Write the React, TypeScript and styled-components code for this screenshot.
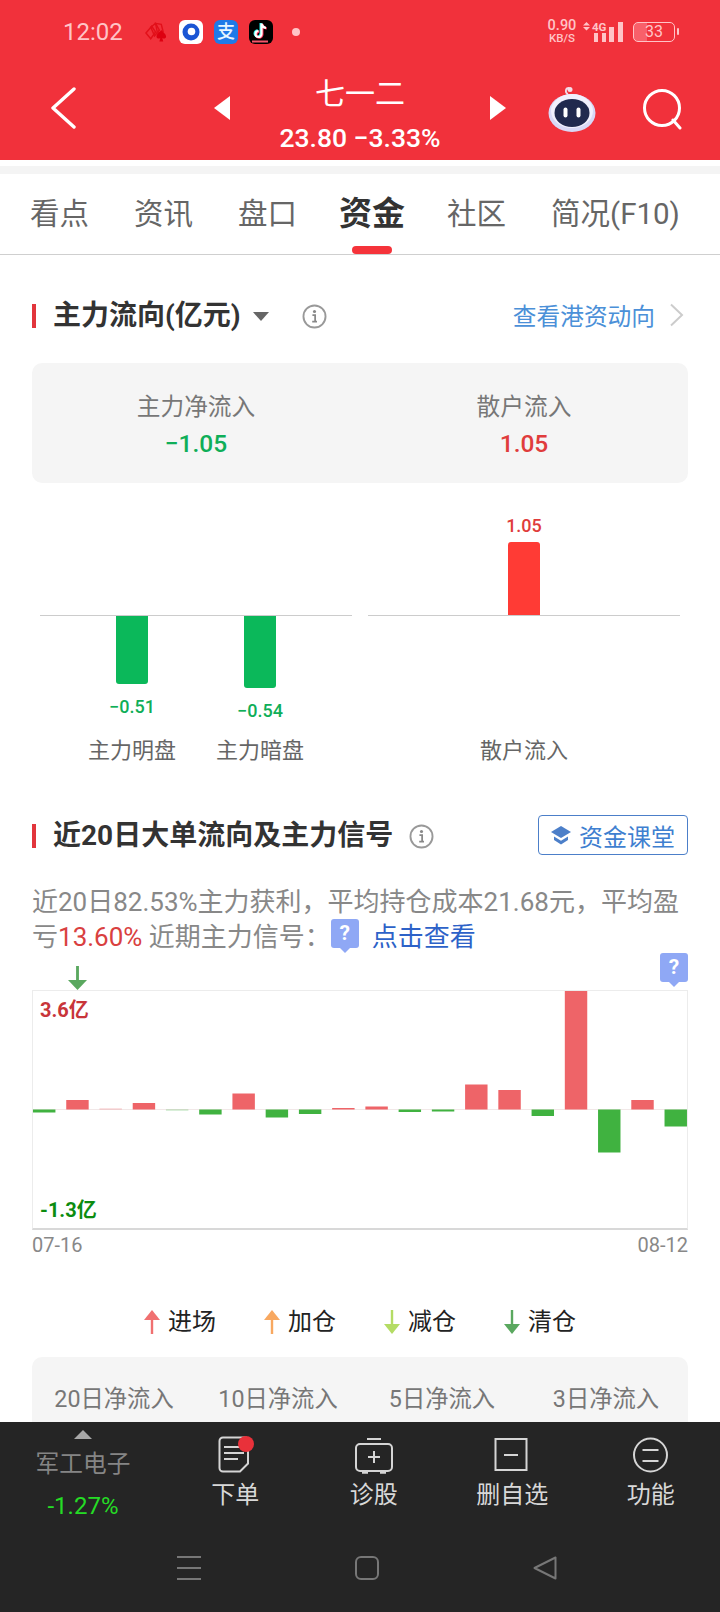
import styled, { createGlobalStyle } from "styled-components";

const GlobalStyle = createGlobalStyle`
  html, body {
    margin: 0;
    padding: 0;
    background: #fff;
  }
  * {
    box-sizing: border-box;
  }
`;

const FONT = `Roboto, "Noto Sans CJK SC", sans-serif`;

const Page = styled.div`
  width: 720px;
  height: 1612px;
  display: flex;
  flex-direction: column;
  overflow: hidden;
  font-family: ${FONT};
  background: #fff;
`;

const Header = styled.header`
  height: 160px;
  flex: none;
  background: #f1313b;
  color: #fff;
`;

const StatusBar = styled.div`
  height: 64px;
  display: flex;
  align-items: center;
  padding: 0 45px 0 63px;
`;

const Clock = styled.span`
  font-size: 24px;
  line-height: 1;
  color: #ffc4c7;
  width: 82px;
`;

const AppIcons = styled.div`
  display: flex;
  align-items: center;
  gap: 11px;
`;

const AppTile = styled.div<{ $bg: string }>`
  width: 24px;
  height: 24px;
  border-radius: 6px;
  background: ${(p) => p.$bg};
  display: flex;
  align-items: center;
  justify-content: center;
  overflow: hidden;
`;

const AlipayGlyph = styled.span`
  font-size: 18px;
  line-height: 1;
  color: #eaf6ff;
  font-weight: 500;
`;

const NoticeDot = styled.span`
  width: 8px;
  height: 8px;
  border-radius: 50%;
  background: #ffc4c7;
  margin-left: 19px;
`;

const StatusRight = styled.div`
  margin-left: auto;
  display: flex;
  align-items: center;
  color: #ffc4c7;
`;

const Speed = styled.div`
  width: 30px;
  margin-right: 6px;
  display: flex;
  flex-direction: column;
  align-items: center;
  font-weight: 500;
  font-size: 14.5px;
  line-height: 13px;
  small {
    font-size: 11.5px;
    line-height: 13px;
  }
`;

const Battery = styled.div`
  width: 42px;
  height: 20px;
  margin-left: 10px;
  border: 1.5px solid #ffc4c7;
  border-radius: 5px;
  background: linear-gradient(90deg, #f8606a 33%, transparent 33%);
  font-size: 16px;
  line-height: 17px;
  text-align: center;
  position: relative;
  &::after {
    content: "";
    position: absolute;
    right: -5px;
    top: 5px;
    width: 2px;
    height: 7px;
    border-radius: 1px;
    background: #ffc4c7;
  }
`;

const NavRow = styled.div`
  height: 96px;
  display: grid;
  grid-template-columns: 1fr 292px 1fr;
  align-items: center;
`;

const BackButton = styled.div`
  padding-left: 50px;
  display: flex;
  margin-top: -8px;
`;

const StockSwitch = styled.div`
  display: flex;
  align-items: center;
  justify-content: space-between;
`;

const Triangle = styled.span<{ $dir: "left" | "right" }>`
  width: 0;
  height: 0;
  margin-top: -8px;
  border-top: 12px solid transparent;
  border-bottom: 12px solid transparent;
  ${(p) =>
    p.$dir === "left"
      ? "border-right: 16px solid #fff;"
      : "border-left: 16px solid #fff;"}
`;

const StockInfo = styled.div`
  display: flex;
  flex-direction: column;
  align-items: center;
  gap: 7px;
  margin-top: 3px;
`;

const StockName = styled.div`
  font-size: 30px;
  line-height: 42px;
  letter-spacing: 0;
`;

const StockQuote = styled.div`
  font-size: 26.5px;
  line-height: 32px;
  font-weight: 500;
  white-space: nowrap;
`;

const NavActions = styled.div`
  display: flex;
  align-items: center;
  justify-content: flex-end;
  padding-right: 36px;
  gap: 46px;
  margin-top: -6px;
`;

const GrayBand = styled.div`
  height: 14px;
  flex: none;
  background: linear-gradient(#fff 6px, #f4f4f4 6px);
`;

const Tabs = styled.nav`
  height: 81px;
  flex: none;
  display: flex;
  align-items: center;
  gap: 45px;
  padding: 0 0 0 30px;
  border-bottom: 1px solid #cfcfcf;
  position: relative;
`;

const Tab = styled.div<{ $active?: boolean }>`
  font-size: ${(p) => (p.$active ? "33px" : "29.5px")};
  font-weight: ${(p) => (p.$active ? 700 : 400)};
  color: ${(p) => (p.$active ? "#333" : "#666")};
  line-height: 40px;
  margin: 0 ${(p) => (p.$active ? "-3px" : "0")};
  white-space: nowrap;
  position: relative;
  ${(p) =>
    p.$active &&
    `&::after {
      content: "";
      position: absolute;
      left: 13px;
      bottom: -20px;
      width: 40px;
      height: 8px;
      border-radius: 4px;
      background: #f5333a;
    }`}
`;

const Main = styled.main`
  flex: 1;
  min-height: 0;
  overflow: hidden;
  padding: 41px 32px 0;
`;

const SectionHead = styled.div<{ $top?: number }>`
  height: 40px;
  margin-top: ${(p) => p.$top ?? 0}px;
  display: flex;
  align-items: center;
`;

const RedMark = styled.span`
  width: 4px;
  height: 24px;
  background: #e2353c;
  margin-right: 17px;
`;

const SectionTitle = styled.h2`
  margin: 0;
  font-size: 28px;
  font-weight: 700;
  color: #333;
  line-height: 40px;
  white-space: nowrap;
`;

const CaretDown = styled.span`
  width: 0;
  height: 0;
  margin-left: 12px;
  border-left: 8px solid transparent;
  border-right: 8px solid transparent;
  border-top: 9px solid #666;
`;

const InfoWrap = styled.span<{ $left: number }>`
  display: flex;
  margin-left: ${(p) => p.$left}px;
`;

const MoreLink = styled.div`
  margin-left: auto;
  margin-top: -3px;
  display: flex;
  align-items: center;
  gap: 14px;
  font-size: 23.7px;
  color: #4b90d8;
  padding-right: 4px;
`;

const SummaryCard = styled.div`
  height: 120px;
  margin-top: 27px;
  padding-top: 8px;
  background: #f5f5f5;
  border-radius: 10px;
  display: grid;
  grid-template-columns: 1fr 1fr;
  align-items: center;
  text-align: center;
`;

const SummaryLabel = styled.div`
  font-size: 23.7px;
  line-height: 34px;
  color: #777;
`;

const SummaryValue = styled.div<{ $color: string }>`
  font-size: 24.5px;
  line-height: 40px;
  font-weight: 500;
  color: ${(p) => p.$color};
`;

const FlowCharts = styled.div`
  display: flex;
  gap: 16px;
  padding: 0 8px;
`;

const FlowGroup = styled.div`
  width: 312px;
`;

const FlowUpper = styled.div`
  height: 133px;
  display: flex;
  justify-content: center;
  align-items: flex-end;
  border-bottom: 1px solid #ccc;
`;

const FlowLower = styled.div`
  height: 120px;
  display: flex;
  justify-content: center;
`;

const FlowColumn = styled.div`
  width: 128px;
  display: flex;
  flex-direction: column;
  align-items: center;
`;

const FlowBar = styled.div<{ $up?: boolean; $height: number }>`
  width: 32px;
  height: ${(p) => p.$height}px;
  background: ${(p) => (p.$up ? "#ff3b35" : "#0bb85a")};
  border-radius: ${(p) => (p.$up ? "3px 3px 0 0" : "0 0 3px 3px")};
`;

const FlowValue = styled.div<{ $color: string; $gap: number; $above?: boolean }>`
  font-size: 18px;
  line-height: 22px;
  font-weight: 500;
  color: ${(p) => p.$color};
  ${(p) => (p.$above ? `margin-bottom: ${p.$gap}px;` : `margin-top: ${p.$gap}px;`)}
`;

const FlowNames = styled.div`
  display: flex;
  justify-content: center;
  height: 30px;
`;

const FlowName = styled.div`
  width: 128px;
  text-align: center;
  font-size: 22px;
  line-height: 30px;
  color: #666;
`;

const CourseButton = styled.div`
  margin-left: auto;
  margin-top: -2px;
  width: 150px;
  height: 40px;
  border: 1.5px solid #4c7fc9;
  border-radius: 4px;
  display: flex;
  align-items: center;
  gap: 7px;
  padding-left: 11px;
  font-size: 24px;
  color: #3f7fd0;
  white-space: nowrap;
`;

const Intro = styled.p`
  margin: 29px 0 0;
  font-size: 26px;
  line-height: 35px;
  color: #888;
  white-space: nowrap;
`;

const RedText = styled.span`
  color: #d94040;
`;

const BlueText = styled.span`
  color: #2d62c8;
`;

const QuestionTag = styled.span`
  display: inline-flex;
  width: 28px;
  height: 29px;
  align-items: center;
  justify-content: center;
  background: #8fa8f5;
  border-radius: 3px;
  color: #fff;
  font-size: 21px;
  font-weight: 700;
  line-height: 1;
  position: relative;
  &::after {
    content: "";
    position: absolute;
    left: 9px;
    bottom: -5px;
    border-left: 5px solid transparent;
    border-right: 5px solid transparent;
    border-top: 5px solid #8fa8f5;
  }
`;

const InlineTag = styled(QuestionTag)`
  margin: 0 13px 0 0;
  top: -6px;
`;

const SignalRow = styled.div`
  height: 37px;
  margin-top: -2px;
  padding-left: 36px;
  display: flex;
  justify-content: space-between;
  align-items: flex-end;
`;

const SignalTag = styled(QuestionTag)`
  align-self: flex-start;
`;

const ChartBox = styled.div`
  height: 240px;
  position: relative;
  border: 1px solid #ececec;
  border-bottom: 2px solid #d8d8d8;
  svg {
    display: block;
    width: 100%;
    height: 100%;
  }
`;

const ChartLabel = styled.span<{ $color: string; $pos: "top" | "bottom" }>`
  position: absolute;
  left: 7px;
  ${(p) => (p.$pos === "top" ? "top: 5px;" : "bottom: 4px;")}
  font-size: 20px;
  line-height: 28px;
  font-weight: 700;
  color: ${(p) => p.$color};
`;

const DateRow = styled.div`
  height: 30px;
  display: flex;
  justify-content: space-between;
  align-items: center;
  font-size: 20px;
  color: #888;
`;

const Legend = styled.div`
  margin-top: 45px;
  height: 34px;
  display: flex;
  justify-content: center;
  gap: 48px;
`;

const LegendItem = styled.div`
  display: flex;
  align-items: center;
  gap: 8px;
  font-size: 24px;
  line-height: 34px;
  color: #222;
`;

const StatsCard = styled.div`
  margin-top: 18px;
  height: 160px;
  padding-top: 25px;
  background: #f5f5f5;
  border-radius: 10px;
  display: grid;
  grid-template-columns: repeat(4, 1fr);
  text-align: center;
`;

const StatsLabel = styled.div`
  font-size: 23.3px;
  line-height: 34px;
  color: #777;
  white-space: nowrap;
`;

const BottomBar = styled.footer`
  height: 190px;
  flex: none;
  background: #252525;
`;

const ActionRow = styled.div`
  height: 122px;
  display: grid;
  grid-template-columns: 166px repeat(4, 1fr);
`;

const SectorBlock = styled.div`
  display: flex;
  flex-direction: column;
  align-items: center;
  padding-top: 8px;
`;

const SectorCaret = styled.span`
  width: 0;
  height: 0;
  border-left: 9px solid transparent;
  border-right: 9px solid transparent;
  border-bottom: 9px solid #a8a8a8;
`;

const SectorName = styled.div`
  margin-top: 10px;
  font-size: 23.7px;
  line-height: 30px;
  color: #858585;
`;

const SectorChange = styled.div`
  margin-top: 12px;
  font-size: 24px;
  line-height: 30px;
  color: #25dc25;
`;

const ActionItem = styled.div`
  display: flex;
  flex-direction: column;
  align-items: center;
  padding-top: 13px;
`;

const ActionLabel = styled.div`
  margin-top: 3px;
  font-size: 24px;
  line-height: 34px;
  color: #d8d8d8;
`;

const SystemNav = styled.div`
  height: 48px;
  display: flex;
  justify-content: center;
  align-items: center;
  gap: 154px;
  padding-left: 13px;
`;

const Info = () => (
  <svg width="25" height="25" viewBox="0 0 24 24" fill="none">
    <circle cx="12" cy="12" r="10.6" stroke="#999" strokeWidth="1.8" />
    <circle cx="12" cy="7.2" r="1.5" fill="#888" />
    <path d="M10 10.6h2.6v6.2M9.8 17h4.6" stroke="#888" strokeWidth="1.7" />
  </svg>
);

const CardsIcon = () => (
  <svg width="23" height="24" viewBox="0 0 24 24" fill="none">
    <g stroke="#e2101a" strokeWidth="1.5">
      <path d="M1 13 7 6l4 6-5 7z" />
      <path d="M6 7l5-4 4 7-5 6z" />
      <path d="M11 3l6 1 2 8-6 1z" />
    </g>
    <path d="M17 10c2 3 5 4 5 7 0 2-3 2.500-4 1l1 4h-4l1-4c-1 1.500-4 1-4-1 0-3 3-4 5-7z" fill="#dd0010" />
  </svg>
);

const TiktokIcon = () => (
  <svg width="24" height="24" viewBox="0 0 24 24" fill="none">
    <path d="M12.500 3.500v10.500a3 3 0 1 1-3-3" stroke="#25f4ee" strokeWidth="2.400" transform="translate(-.8 -.6)" />
    <path d="M12.500 3.500v10.500a3 3 0 1 1-3-3M12.500 3.500c.4 2.500 2 4 4.500 4.300" stroke="#fe2c55" strokeWidth="2.400" transform="translate(.8 .6)" />
    <path d="M12.500 3.500v10.500a3 3 0 1 1-3-3M12.500 3.500c.4 2.500 2 4 4.500 4.300" stroke="#fff" strokeWidth="2.200" />
    <path d="M3 21.500h16" stroke="#f5556a" strokeWidth="2" />
  </svg>
);

const NetworkIcon = () => (
  <svg width="40" height="24" viewBox="0 0 40 24" fill="#ffc4c7">
    <path d="M0 5.500 3.500 2 7 5.500zM0 7l3.500 3.500L7 7z" />
    <text x="9" y="10.500" fontSize="11.500" fontWeight="700" fontFamily="Roboto, sans-serif">4G</text>
    <rect x="11" y="13" width="4" height="9" />
    <rect x="19" y="13" width="4" height="9" />
    <rect x="26" y="7" width="5" height="15" />
    <rect x="35" y="2" width="5" height="20" />
  </svg>
);

const Chevron = () => (
  <svg width="26" height="42" viewBox="0 0 26 42" fill="none">
    <path d="M24 2 3 21l21 19" stroke="#fff" strokeWidth="3.400" strokeLinecap="round" strokeLinejoin="round" />
  </svg>
);

const RobotIcon = () => (
  <svg width="48" height="46" viewBox="0 0 48 46" fill="none">
    <path d="M20 8c-3-1-3-6 1-6" stroke="#f0d9e8" strokeWidth="1.800" />
    <circle cx="22" cy="3.500" r="2.500" fill="#f4dfe9" />
    <ellipse cx="24" cy="27" rx="23.500" ry="19" fill="#d8d8f6" />
    <ellipse cx="24" cy="25" rx="21" ry="17" fill="#f1f0fd" />
    <ellipse cx="24" cy="27" rx="17.500" ry="14" fill="#20294e" />
    <rect x="15.500" y="21.500" width="4" height="10" rx="2" fill="#fff" />
    <rect x="28.500" y="21.500" width="4" height="10" rx="2" fill="#fff" />
  </svg>
);

const SearchIcon = () => (
  <svg width="42" height="42" viewBox="0 0 42 42" fill="none">
    <circle cx="20" cy="20" r="17.500" stroke="#fff" strokeWidth="3" />
    <path d="m31 32 7 8" stroke="#fff" strokeWidth="3" strokeLinecap="round" />
  </svg>
);

const RightChevron = () => (
  <svg width="15" height="24" viewBox="0 0 15 24" fill="none">
    <path d="M2 1.500 13 12 2 22.500" stroke="#ccc" strokeWidth="2" />
  </svg>
);

const HatIcon = () => (
  <svg width="22" height="22" viewBox="0 0 22 22" fill="#4c7fc9">
    <path d="M11 2 21 8l-10 6L1 8z" />
    <path d="M4 12.500v3.500l7 4.500 7-4.500v-3.500l-7 4.200z" />
  </svg>
);

const Arrow = ({ color, up, width = 16 }: { color: string; up?: boolean; width?: number }) => (
  <svg width={width} height="24" viewBox="0 0 16 24" preserveAspectRatio="none" fill="none">
    {up ? (
      <>
        <path d="M8 8v16" stroke={color} strokeWidth="2.400" />
        <path d="M0 10 8 0l8 10z" fill={color} />
      </>
    ) : (
      <>
        <path d="M8 0v16" stroke={color} strokeWidth="2.400" />
        <path d="M0 14 8 24l8-10z" fill={color} />
      </>
    )}
  </svg>
);

const NoteIcon = () => (
  <svg width="40" height="40" viewBox="0 0 40 40" fill="none" overflow="visible">
    <path d="M8 2.500h22a3 3 0 0 1 3 3v23l-8 8H8a3.500 3.500 0 0 1-3.500-3.500V6a3.500 3.500 0 0 1 3.500-3.500z" stroke="#d5d5d5" strokeWidth="2" />
    <path d="M9 12h20M9 18h20M9 24h14" stroke="#d5d5d5" strokeWidth="2" />
    <circle cx="31" cy="9" r="8" fill="#e9313a" />
  </svg>
);

const CaseIcon = () => (
  <svg width="40" height="40" viewBox="0 0 40 40" fill="none">
    <path d="M13 4h14" stroke="#d5d5d5" strokeWidth="2" />
    <rect x="2" y="9" width="36" height="27" rx="4" stroke="#d5d5d5" strokeWidth="2" />
    <path d="M20 16v12M14 22h12" stroke="#d5d5d5" strokeWidth="2" />
    <path d="M8 37.500h6M26 37.500h6" stroke="#d5d5d5" strokeWidth="2.400" />
  </svg>
);

const MinusBoxIcon = () => (
  <svg width="40" height="40" viewBox="0 0 40 40" fill="none">
    <rect x="3.500" y="4" width="31" height="31" stroke="#d5d5d5" strokeWidth="2" />
    <path d="M12 20h14" stroke="#d5d5d5" strokeWidth="2" />
  </svg>
);

const MenuCircleIcon = () => (
  <svg width="40" height="40" viewBox="0 0 40 40" fill="none">
    <circle cx="19.500" cy="20" r="16.500" stroke="#d5d5d5" strokeWidth="2" />
    <path d="M11.500 15h16M11.500 26h16" stroke="#d5d5d5" strokeWidth="2" />
  </svg>
);

const SysMenu = () => (
  <svg width="24" height="24" viewBox="0 0 24 24" fill="none">
    <path d="M0 1h24M0 12h24M0 23h24" stroke="#777" strokeWidth="2" />
  </svg>
);

const SysHome = () => (
  <svg width="24" height="24" viewBox="0 0 24 24" fill="none">
    <rect x="1" y="1" width="22" height="22" rx="5" stroke="#777" strokeWidth="2" />
  </svg>
);

const SysBack = () => (
  <svg width="24" height="24" viewBox="0 0 24 24" fill="none">
    <path d="M22.500 1.500v21L1.500 12z" stroke="#777" strokeWidth="2" strokeLinejoin="round" />
  </svg>
);

// 20 days of net flow, px from the zero line
const bars = [
  -3, 9.5, 1, 6.5, -1, -5, 16, -8, -4.5, 1.5, 3, -2.5, -2, 25, 19.5, -6.500,
  119, -43, 9.5, -17,
];

const FlowChart = () => (
  <svg viewBox="0 0 656 237" preserveAspectRatio="none">
    <line x1="0" x2="656" y1="118.500" y2="118.500" stroke="#f1e8e8" />
    {bars.map((v, i) => {
      const pale = Math.abs(v) <= 1;
      const up = v > 0;
      return (
        <rect
          key={i}
          x={i * 33.34}
          y={up ? 118.5 - v : 118.5}
          width="22.500"
          height={Math.abs(v)}
          fill={up ? "#ee6468" : "#40b240"}
          opacity={pale ? 0.4 : 1}
        />
      );
    })}
  </svg>
);

export default function App() {
  return (
    <Page>
      <GlobalStyle />
      <Header>
        <StatusBar>
          <Clock>12:02</Clock>
          <AppIcons>
            <CardsIcon />
            <AppTile $bg="#fff">
              <svg width="20" height="20" viewBox="0 0 20 20">
                <circle cx="10" cy="10" r="8.500" fill="#1a55d4" />
                <circle cx="10.500" cy="9.500" r="3.800" fill="#fff" />
              </svg>
            </AppTile>
            <AppTile $bg="#1f7ae8">
              <AlipayGlyph>支</AlipayGlyph>
            </AppTile>
            <AppTile $bg="#000">
              <TiktokIcon />
            </AppTile>
          </AppIcons>
          <NoticeDot />
          <StatusRight>
            <Speed>
              0.90
              <small>KB/S</small>
            </Speed>
            <NetworkIcon />
            <Battery>33</Battery>
          </StatusRight>
        </StatusBar>
        <NavRow>
          <BackButton>
            <Chevron />
          </BackButton>
          <StockSwitch>
            <Triangle $dir="left" />
            <StockInfo>
              <StockName>七一二</StockName>
              <StockQuote>23.80 −3.33%</StockQuote>
            </StockInfo>
            <Triangle $dir="right" />
          </StockSwitch>
          <NavActions>
            <RobotIcon />
            <SearchIcon />
          </NavActions>
        </NavRow>
      </Header>
      <GrayBand />
      <Tabs>
        <Tab>看点</Tab>
        <Tab>资讯</Tab>
        <Tab>盘口</Tab>
        <Tab $active>资金</Tab>
        <Tab>社区</Tab>
        <Tab>简况(F10)</Tab>
      </Tabs>
      <Main>
        <SectionHead>
          <RedMark />
          <SectionTitle>主力流向(亿元)</SectionTitle>
          <CaretDown />
          <InfoWrap $left={33}>
            <Info />
          </InfoWrap>
          <MoreLink>
            查看港资动向
            <RightChevron />
          </MoreLink>
        </SectionHead>
        <SummaryCard>
          <div>
            <SummaryLabel>主力净流入</SummaryLabel>
            <SummaryValue $color="#0fae58">−1.05</SummaryValue>
          </div>
          <div>
            <SummaryLabel>散户流入</SummaryLabel>
            <SummaryValue $color="#e03c3c">1.05</SummaryValue>
          </div>
        </SummaryCard>
        <FlowCharts>
          <FlowGroup>
            <FlowUpper />
            <FlowLower>
              <FlowColumn>
                <FlowBar $height={68} />
                <FlowValue $color="#0fae58" $gap={12}>−0.51</FlowValue>
              </FlowColumn>
              <FlowColumn>
                <FlowBar $height={72} />
                <FlowValue $color="#0fae58" $gap={12}>−0.54</FlowValue>
              </FlowColumn>
            </FlowLower>
            <FlowNames>
              <FlowName>主力明盘</FlowName>
              <FlowName>主力暗盘</FlowName>
            </FlowNames>
          </FlowGroup>
          <FlowGroup>
            <FlowUpper>
              <FlowColumn>
                <FlowValue $color="#e03c3c" $gap={5} $above>1.05</FlowValue>
                <FlowBar $up $height={73} />
              </FlowColumn>
            </FlowUpper>
            <FlowLower />
            <FlowNames>
              <FlowName>散户流入</FlowName>
            </FlowNames>
          </FlowGroup>
        </FlowCharts>
        <SectionHead $top={50}>
          <RedMark />
          <SectionTitle>近20日大单流向及主力信号</SectionTitle>
          <InfoWrap $left={16}>
            <Info />
          </InfoWrap>
          <CourseButton>
            <HatIcon />
            资金课堂
          </CourseButton>
        </SectionHead>
        <Intro>
          近20日82.53%主力获利，平均持仓成本21.68元，平均盈
          <br />
          亏<RedText>13.60%</RedText> 近期主力信号：
          <InlineTag>?</InlineTag>
          <BlueText>点击查看</BlueText>
        </Intro>
        <SignalRow>
          <Arrow color="#5aa85f" width={19} />
          <SignalTag>?</SignalTag>
        </SignalRow>
        <ChartBox>
          <FlowChart />
          <ChartLabel $pos="top" $color="#c8353a">3.6亿</ChartLabel>
          <ChartLabel $pos="bottom" $color="#0c8c10">-1.3亿</ChartLabel>
        </ChartBox>
        <DateRow>
          <span>07-16</span>
          <span>08-12</span>
        </DateRow>
        <Legend>
          <LegendItem>
            <Arrow color="#f07070" up />
            进场
          </LegendItem>
          <LegendItem>
            <Arrow color="#f8a860" up />
            加仓
          </LegendItem>
          <LegendItem>
            <Arrow color="#b4dc64" />
            减仓
          </LegendItem>
          <LegendItem>
            <Arrow color="#5aa85f" />
            清仓
          </LegendItem>
        </Legend>
        <StatsCard>
          <StatsLabel>20日净流入</StatsLabel>
          <StatsLabel>10日净流入</StatsLabel>
          <StatsLabel>5日净流入</StatsLabel>
          <StatsLabel>3日净流入</StatsLabel>
        </StatsCard>
      </Main>
      <BottomBar>
        <ActionRow>
          <SectorBlock>
            <SectorCaret />
            <SectorName>军工电子</SectorName>
            <SectorChange>-1.27%</SectorChange>
          </SectorBlock>
          <ActionItem>
            <NoteIcon />
            <ActionLabel>下单</ActionLabel>
          </ActionItem>
          <ActionItem>
            <CaseIcon />
            <ActionLabel>诊股</ActionLabel>
          </ActionItem>
          <ActionItem>
            <MinusBoxIcon />
            <ActionLabel>删自选</ActionLabel>
          </ActionItem>
          <ActionItem>
            <MenuCircleIcon />
            <ActionLabel>功能</ActionLabel>
          </ActionItem>
        </ActionRow>
        <SystemNav>
          <SysMenu />
          <SysHome />
          <SysBack />
        </SystemNav>
      </BottomBar>
    </Page>
  );
}
